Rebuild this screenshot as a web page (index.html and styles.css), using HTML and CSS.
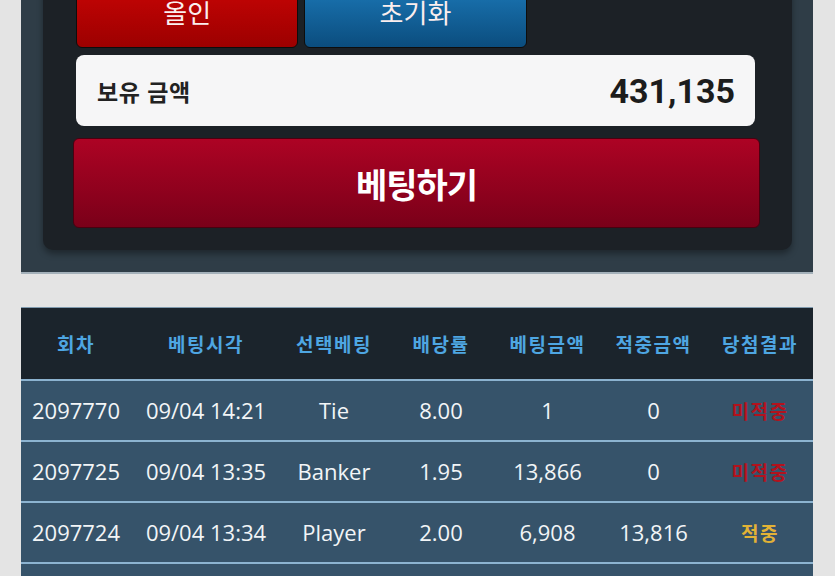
FILE: index.html
```html
<!DOCTYPE html>
<html lang="ko">
<head>
    <meta charset="UTF-8">
    <meta name="viewport" content="width=device-width, initial-scale=1.0">
    <title>베팅</title>
    <link rel="stylesheet" href="styles.css">
</head>
<body>
    <section class="bet-panel">
        <div class="bet-box">
            <div class="quick-buttons">
                <button class="quick-btn all-in">올인</button>
                <button class="quick-btn reset">초기화</button>
                <span></span>
            </div>
            <div class="balance">
                <span class="balance-label">보유 금액</span>
                <span class="balance-value">431,135</span>
            </div>
            <button class="bet-btn">베팅하기</button>
        </div>
    </section>

    <table class="history">
        <colgroup>
            <col style="width: 110px">
            <col style="width: 150px">
            <col style="width: 106px">
            <col style="width: 108px">
            <col style="width: 105px">
            <col style="width: 107px">
            <col style="width: 106px">
        </colgroup>
        <thead>
            <tr>
                <th>회차</th>
                <th>베팅시각</th>
                <th>선택베팅</th>
                <th>배당률</th>
                <th>베팅금액</th>
                <th>적중금액</th>
                <th>당첨결과</th>
            </tr>
        </thead>
        <tbody>
            <tr>
                <td>2097770</td>
                <td>09/04 14:21</td>
                <td>Tie</td>
                <td>8.00</td>
                <td>1</td>
                <td>0</td>
                <td class="result lose">미적중</td>
            </tr>
            <tr>
                <td>2097725</td>
                <td>09/04 13:35</td>
                <td>Banker</td>
                <td>1.95</td>
                <td>13,866</td>
                <td>0</td>
                <td class="result lose">미적중</td>
            </tr>
            <tr>
                <td>2097724</td>
                <td>09/04 13:34</td>
                <td>Player</td>
                <td>2.00</td>
                <td>6,908</td>
                <td>13,816</td>
                <td class="result win">적중</td>
            </tr>
            <tr>
                <td>2097711</td>
                <td>09/04 13:20</td>
                <td>Banker</td>
                <td>1.95</td>
                <td>5,000</td>
                <td>0</td>
                <td class="result lose">미적중</td>
            </tr>
        </tbody>
    </table>
</body>
</html>
```

FILE: styles.css
```css
:root {
    --page-bg: #e4e4e4;
    --panel-bg: #2f3d47;
    --box-bg: #1c2126;
    --head-bg: #1b242c;
    --row-bg: #36536a;
    --row-line: #8cb3d0;
    --head-text: #4ea6e2;
    --lose-color: #b3121d;
    --win-color: #e2b236;
}

* {
    margin: 0;
    padding: 0;
    box-sizing: border-box;
}

body {
    background-color: var(--page-bg);
    font-family: "Noto Sans CJK KR", "Open Sans", sans-serif;
    overflow: hidden;
}

.bet-panel {
    margin: -56px 22px 0 21px;
    padding: 22px 21px 22px 22px;
    background-color: var(--panel-bg);
    border-bottom: 2px solid #a4b1ba;
}

.bet-box {
    background-color: var(--box-bg);
    border-radius: 10px;
    padding: 22px 37px 22px 33px;
    box-shadow: 0 4px 6px rgba(0, 0, 0, 0.35);
}

.quick-buttons {
    display: grid;
    grid-template-columns: repeat(3, 1fr);
    gap: 6px;
}

.quick-btn {
    height: 60px;
    border: 1px solid #0d0d0d;
    border-radius: 6px;
    color: #fbeeee;
    font-family: "Noto Sans CJK KR", sans-serif;
    font-size: 26px;
    line-height: 32px;
    padding-bottom: 12px;
    cursor: pointer;
}

.all-in {
    background: linear-gradient(#c40404, #9c0000);
}

.reset {
    background: linear-gradient(#1a74b2, #0b4d7e);
}

.balance {
    display: flex;
    align-items: center;
    justify-content: space-between;
    height: 71px;
    margin-top: 7px;
    padding: 0 20px 0 21px;
    background-color: #f6f6f7;
    border-radius: 8px;
}

.balance-label {
    font-size: 23px;
    font-weight: 700;
    letter-spacing: 0.5px;
    color: #222222;
}

.balance-value {
    font-family: Roboto, sans-serif;
    font-size: 34px;
    font-weight: 700;
    color: #1c1c1c;
}

.bet-btn {
    display: block;
    width: calc(100% + 8px);
    height: 90px;
    margin: 12px -5px 0 -3px;
    background: linear-gradient(#ad0324, #7a0019);
    border: 1px solid #4a0010;
    border-radius: 6px;
    color: #ffffff;
    font-family: "Noto Sans CJK KR", sans-serif;
    font-size: 34px;
    font-weight: 700;
    letter-spacing: -1px;
    cursor: pointer;
}

.history {
    width: 792px;
    margin: 33px 0 0 21px;
    border-collapse: collapse;
    table-layout: fixed;
}

.history thead tr {
    background-color: var(--head-bg);
    border-top: 1px solid #7f9aae;
}

.history th {
    height: 72px;
    color: var(--head-text);
    font-size: 19px;
    font-weight: 700;
    letter-spacing: 1.5px;
    text-align: center;
}

.history tbody tr {
    background-color: var(--row-bg);
    border-top: 2px solid var(--row-line);
}

.history td {
    height: 61px;
    color: #f2f5f7;
    font-family: "Open Sans", "Noto Sans CJK KR", sans-serif;
    font-size: 22px;
    text-align: center;
    white-space: nowrap;
}

.history td.result {
    font-family: "Noto Sans CJK KR", sans-serif;
    font-size: 19px;
    font-weight: 700;
    letter-spacing: 1.5px;
}

.lose {
    color: var(--lose-color) !important;
}

.win {
    color: var(--win-color) !important;
}
```
